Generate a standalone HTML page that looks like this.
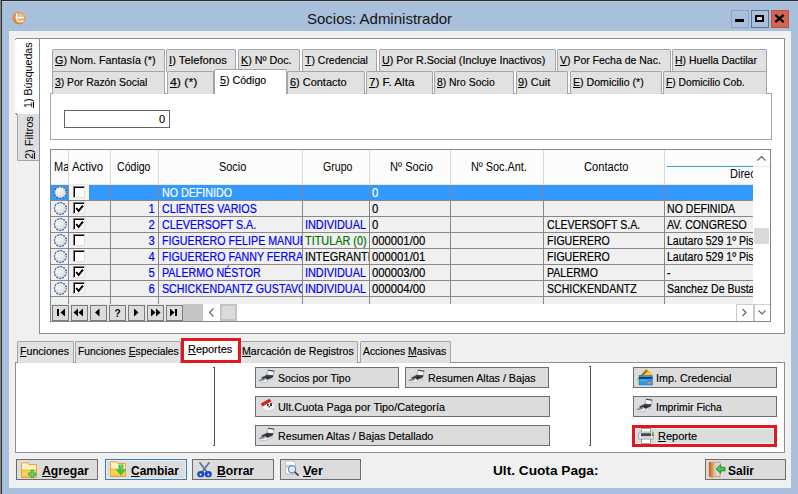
<!DOCTYPE html><html><head><meta charset="utf-8"><style>html,body{margin:0;padding:0;}body{width:798px;height:494px;position:relative;overflow:hidden;background:#a8c0dc;font-family:"Liberation Sans",sans-serif;} u{text-decoration:underline;text-underline-offset:1px;text-decoration-thickness:1px;} svg{position:absolute;overflow:visible}</style></head><body>
<div style="position:absolute;left:0px;top:0px;width:798px;height:1px;background:#2b2b2b"></div>
<div style="position:absolute;left:0px;top:0px;width:1px;height:494px;background:#8a8a8a"></div>
<div style="position:absolute;left:1px;top:0px;width:1px;height:494px;background:#2b2b2b"></div>
<div style="position:absolute;left:2px;top:1px;width:796px;height:1px;background:#b9cde6"></div>
<svg style="left:11px;top:10px" width="16" height="16" viewBox="0 0 16 16"><defs><radialGradient id="ig" cx="0.6" cy="0.4" r="0.75"><stop offset="0" stop-color="#f6d2a8"/><stop offset="0.45" stop-color="#e9a05a"/><stop offset="1" stop-color="#cf6e22"/></radialGradient></defs><circle cx="8" cy="8" r="6.5" fill="url(#ig)"/><path d="M6.2 3.2 C5.2 5.2 5.2 9 6.3 10.6 C7.4 12 10 11.8 12.6 10.8" stroke="#fff" stroke-width="1.3" fill="none"/><path d="M6.2 7.6 H13" stroke="#fff" stroke-width="1.3"/></svg>
<div style="position:absolute;top:11px;font:normal 15px/15px 'Liberation Sans', sans-serif;color:#141414;white-space:nowrap;left:307px;transform:scaleX(1.0000);transform-origin:0 0">Socios: Administrador</div>
<div style="position:absolute;left:731px;top:10px;width:18px;height:18px;box-sizing:border-box;border:1px solid #8da3bf;background:#a8c0dc"></div>
<div style="position:absolute;left:735px;top:19px;width:9px;height:3px;background:#000"></div>
<div style="position:absolute;left:751px;top:10px;width:18px;height:18px;box-sizing:border-box;border:1px solid #5d728d;background:#a8c0dc"></div>
<div style="position:absolute;left:755px;top:15px;width:9px;height:7px;box-sizing:border-box;border:2px solid #000;background:#c9dcf0"></div>
<div style="position:absolute;left:771px;top:10px;width:18px;height:18px;box-sizing:border-box;border:1px solid #c0513d;background:#d4664f"></div>
<svg style="left:774px;top:14px" width="11" height="9" viewBox="0 0 11 9"><path d="M1.3 0.8 L9.7 8.2 M9.7 0.8 L1.3 8.2" stroke="#000" stroke-width="2.3"/></svg>
<div style="position:absolute;left:9px;top:31px;width:782px;height:457px;background:#f0f0f0"></div>
<div style="position:absolute;left:39px;top:38px;width:746px;height:296px;box-sizing:border-box;border:1px solid #8b8f96;background:#fff"></div>
<div style="position:absolute;left:15px;top:39px;width:24px;height:75px;background:#fff"></div>
<div style="position:absolute;left:16px;top:38px;width:23px;height:1px;background:#8b8f96"></div>
<div style="position:absolute;left:15px;top:39px;width:1px;height:1px;background:#8b8f96"></div>
<div style="position:absolute;left:23px;top:108px;transform:rotate(-90deg);transform-origin:0 0;font:11px/11px 'Liberation Sans', sans-serif;color:#000;white-space:nowrap"><span style="display:inline-block;transform:scaleX(0.965);transform-origin:0 0"><u>1</u>) Búsquedas</span></div>
<div style="position:absolute;left:17px;top:114px;width:22px;height:47px;box-sizing:border-box;border:1px solid #a2a5aa;border-right:none;border-top:none;border-radius:0 0 0 2px;background:#dedede"></div>
<div style="position:absolute;left:15px;top:113px;width:2px;height:1px;background:#8b8f96"></div>
<div style="position:absolute;left:16px;top:114px;width:1px;height:1px;background:#8b8f96"></div>
<div style="position:absolute;left:24px;top:159px;transform:rotate(-90deg);transform-origin:0 0;font:11px/11px 'Liberation Sans', sans-serif;color:#000;white-space:nowrap"><span style="display:inline-block;transform:scaleX(1.0);transform-origin:0 0"><u>2</u>) Filtros</span></div>
<div style="position:absolute;left:50px;top:93px;width:722px;height:47px;box-sizing:border-box;border:1px solid #a2a5aa;background:#fff"></div>
<div style="position:absolute;left:52px;top:49px;width:113px;height:23px;box-sizing:border-box;border:1px solid #a2a5aa;border-bottom:none;border-radius:2px 2px 0 0;background:#e1e1e1"></div>
<div style="position:absolute;top:55px;font:normal 11px/11px 'Liberation Sans', sans-serif;color:#000;white-space:nowrap;-webkit-text-stroke:0.15px currentColor;left:54.9px;transform:scaleX(0.9844);transform-origin:0 0"><u>G</u>) Nom. Fantasía (*)</div>
<div style="position:absolute;left:166px;top:49px;width:70px;height:23px;box-sizing:border-box;border:1px solid #a2a5aa;border-bottom:none;border-radius:2px 2px 0 0;background:#e1e1e1"></div>
<div style="position:absolute;top:55px;font:normal 11px/11px 'Liberation Sans', sans-serif;color:#000;white-space:nowrap;-webkit-text-stroke:0.15px currentColor;left:169.2px;transform:scaleX(1.0217);transform-origin:0 0"><u>I</u>) Telefonos</div>
<div style="position:absolute;left:238px;top:49px;width:62px;height:23px;box-sizing:border-box;border:1px solid #a2a5aa;border-bottom:none;border-radius:2px 2px 0 0;background:#e1e1e1"></div>
<div style="position:absolute;top:55px;font:normal 11px/11px 'Liberation Sans', sans-serif;color:#000;white-space:nowrap;-webkit-text-stroke:0.15px currentColor;left:240.7px;transform:scaleX(0.9787);transform-origin:0 0"><u>K</u>) Nº Doc.</div>
<div style="position:absolute;left:302px;top:49px;width:75px;height:23px;box-sizing:border-box;border:1px solid #a2a5aa;border-bottom:none;border-radius:2px 2px 0 0;background:#e1e1e1"></div>
<div style="position:absolute;top:55px;font:normal 11px/11px 'Liberation Sans', sans-serif;color:#000;white-space:nowrap;-webkit-text-stroke:0.15px currentColor;left:305.3px;transform:scaleX(0.9524);transform-origin:0 0"><u>T</u>) Credencial</div>
<div style="position:absolute;left:379px;top:49px;width:177px;height:23px;box-sizing:border-box;border:1px solid #a2a5aa;border-bottom:none;border-radius:2px 2px 0 0;background:#e1e1e1"></div>
<div style="position:absolute;top:55px;font:normal 11px/11px 'Liberation Sans', sans-serif;color:#000;white-space:nowrap;-webkit-text-stroke:0.15px currentColor;left:382.4px;transform:scaleX(0.9748);transform-origin:0 0"><u>U</u>) Por R.Social (Incluye Inactivos)</div>
<div style="position:absolute;left:557px;top:49px;width:114px;height:23px;box-sizing:border-box;border:1px solid #a2a5aa;border-bottom:none;border-radius:2px 2px 0 0;background:#e1e1e1"></div>
<div style="position:absolute;top:55px;font:normal 11px/11px 'Liberation Sans', sans-serif;color:#000;white-space:nowrap;-webkit-text-stroke:0.15px currentColor;left:559.8px;transform:scaleX(0.9529);transform-origin:0 0"><u>V</u>) Por Fecha de Nac.</div>
<div style="position:absolute;left:672px;top:49px;width:95px;height:23px;box-sizing:border-box;border:1px solid #a2a5aa;border-bottom:none;border-radius:2px 2px 0 0;background:#e1e1e1"></div>
<div style="position:absolute;top:55px;font:normal 11px/11px 'Liberation Sans', sans-serif;color:#000;white-space:nowrap;-webkit-text-stroke:0.15px currentColor;left:675.1px;transform:scaleX(0.9501);transform-origin:0 0"><u>H</u>) Huella Dactilar</div>
<div style="position:absolute;left:52px;top:71px;width:113px;height:23px;box-sizing:border-box;border:1px solid #a2a5aa;border-bottom:none;border-radius:2px 2px 0 0;background:#e1e1e1"></div>
<div style="position:absolute;top:77px;font:normal 11px/11px 'Liberation Sans', sans-serif;color:#000;white-space:nowrap;-webkit-text-stroke:0.15px currentColor;left:55.4px;transform:scaleX(0.9433);transform-origin:0 0"><u>3</u>) Por Razón Social</div>
<div style="position:absolute;left:167px;top:71px;width:47px;height:23px;box-sizing:border-box;border:1px solid #a2a5aa;border-bottom:none;border-radius:2px 2px 0 0;background:#e1e1e1"></div>
<div style="position:absolute;top:77px;font:normal 11px/11px 'Liberation Sans', sans-serif;color:#000;white-space:nowrap;-webkit-text-stroke:0.15px currentColor;left:169.7px;transform:scaleX(1.1164);transform-origin:0 0"><u>4</u>) (*)</div>
<div style="position:absolute;left:287px;top:71px;width:78px;height:23px;box-sizing:border-box;border:1px solid #a2a5aa;border-bottom:none;border-radius:2px 2px 0 0;background:#e1e1e1"></div>
<div style="position:absolute;top:77px;font:normal 11px/11px 'Liberation Sans', sans-serif;color:#000;white-space:nowrap;-webkit-text-stroke:0.15px currentColor;left:289.6px;transform:scaleX(0.9952);transform-origin:0 0"><u>6</u>) Contacto</div>
<div style="position:absolute;left:366px;top:71px;width:67px;height:23px;box-sizing:border-box;border:1px solid #a2a5aa;border-bottom:none;border-radius:2px 2px 0 0;background:#e1e1e1"></div>
<div style="position:absolute;top:77px;font:normal 11px/11px 'Liberation Sans', sans-serif;color:#000;white-space:nowrap;-webkit-text-stroke:0.15px currentColor;left:369.2px;transform:scaleX(1.0604);transform-origin:0 0"><u>7</u>) F. Alta</div>
<div style="position:absolute;left:434px;top:71px;width:80px;height:23px;box-sizing:border-box;border:1px solid #a2a5aa;border-bottom:none;border-radius:2px 2px 0 0;background:#e1e1e1"></div>
<div style="position:absolute;top:77px;font:normal 11px/11px 'Liberation Sans', sans-serif;color:#000;white-space:nowrap;-webkit-text-stroke:0.15px currentColor;left:437.4px;transform:scaleX(0.9435);transform-origin:0 0"><u>8</u>) Nro Socio</div>
<div style="position:absolute;left:516px;top:71px;width:52px;height:23px;box-sizing:border-box;border:1px solid #a2a5aa;border-bottom:none;border-radius:2px 2px 0 0;background:#e1e1e1"></div>
<div style="position:absolute;top:77px;font:normal 11px/11px 'Liberation Sans', sans-serif;color:#000;white-space:nowrap;-webkit-text-stroke:0.15px currentColor;left:518.4px;transform:scaleX(0.9967);transform-origin:0 0"><u>9</u>) Cuit</div>
<div style="position:absolute;left:570px;top:71px;width:92px;height:23px;box-sizing:border-box;border:1px solid #a2a5aa;border-bottom:none;border-radius:2px 2px 0 0;background:#e1e1e1"></div>
<div style="position:absolute;top:77px;font:normal 11px/11px 'Liberation Sans', sans-serif;color:#000;white-space:nowrap;-webkit-text-stroke:0.15px currentColor;left:572.8px;transform:scaleX(0.9640);transform-origin:0 0"><u>E</u>) Domicilio (*)</div>
<div style="position:absolute;left:663px;top:71px;width:104px;height:23px;box-sizing:border-box;border:1px solid #a2a5aa;border-bottom:none;border-radius:2px 2px 0 0;background:#e1e1e1"></div>
<div style="position:absolute;top:77px;font:normal 11px/11px 'Liberation Sans', sans-serif;color:#000;white-space:nowrap;-webkit-text-stroke:0.15px currentColor;left:665.8px;transform:scaleX(0.9327);transform-origin:0 0"><u>F</u>) Domicilio Cob.</div>
<div style="position:absolute;left:214px;top:69px;width:73px;height:25px;box-sizing:border-box;border:1px solid #a2a5aa;border-bottom:none;border-radius:2px 2px 0 0;background:#fff"></div>
<div style="position:absolute;top:75px;font:normal 11px/11px 'Liberation Sans', sans-serif;color:#000;white-space:nowrap;-webkit-text-stroke:0.15px currentColor;left:220.4px;transform:scaleX(0.9706);transform-origin:0 0"><u>5</u>) Código</div>
<div style="position:absolute;left:64px;top:110px;width:106px;height:18px;box-sizing:border-box;border:1px solid #646464;background:#fff"></div>
<div style="position:absolute;top:114px;font:normal 11px/11px 'Liberation Sans', sans-serif;color:#000;white-space:nowrap;-webkit-text-stroke:0.15px currentColor;right:633px;transform:scaleX(1.0000);transform-origin:100% 0">0</div>
<div style="position:absolute;left:50px;top:149px;width:721px;height:173px;box-sizing:border-box;border:1px solid #828790;background:#f0f0f0"></div>
<div style="position:absolute;left:51px;top:150px;width:702px;height:34px;background:#fcfcfc"></div>
<div style="position:absolute;left:68px;top:150px;width:1px;height:34px;background:#d9d9d9"></div>
<div style="position:absolute;left:110px;top:150px;width:1px;height:34px;background:#d9d9d9"></div>
<div style="position:absolute;left:158px;top:150px;width:1px;height:34px;background:#d9d9d9"></div>
<div style="position:absolute;left:302px;top:150px;width:1px;height:34px;background:#d9d9d9"></div>
<div style="position:absolute;left:369px;top:150px;width:1px;height:34px;background:#d9d9d9"></div>
<div style="position:absolute;left:450px;top:150px;width:1px;height:34px;background:#d9d9d9"></div>
<div style="position:absolute;left:543px;top:150px;width:1px;height:34px;background:#d9d9d9"></div>
<div style="position:absolute;left:664px;top:150px;width:1px;height:34px;background:#d9d9d9"></div>
<div style="position:absolute;left:51px;top:184px;width:702px;height:1px;background:#ece6df"></div>
<div style="position:absolute;left:51px;top:150px;width:17px;height:34px;overflow:hidden"><div style="position:absolute;left:3px;top:11px;font:12px/12px 'Liberation Sans', sans-serif;white-space:nowrap;transform:scaleX(.92);transform-origin:0 0">Ma</div></div>
<div style="position:absolute;top:161px;font:normal 12px/12px 'Liberation Sans', sans-serif;color:#000;white-space:nowrap;left:72.2px;transform:scaleX(0.9514);transform-origin:0 0">Activo</div>
<div style="position:absolute;top:161px;font:normal 12px/12px 'Liberation Sans', sans-serif;color:#000;white-space:nowrap;left:116.9px;transform:scaleX(0.8809);transform-origin:0 0">Código</div>
<div style="position:absolute;top:161px;font:normal 12px/12px 'Liberation Sans', sans-serif;color:#000;white-space:nowrap;left:219.0px;transform:scaleX(0.9091);transform-origin:0 0">Socio</div>
<div style="position:absolute;top:161px;font:normal 12px/12px 'Liberation Sans', sans-serif;color:#000;white-space:nowrap;left:323.1px;transform:scaleX(0.8843);transform-origin:0 0">Grupo</div>
<div style="position:absolute;top:161px;font:normal 12px/12px 'Liberation Sans', sans-serif;color:#000;white-space:nowrap;left:389.7px;transform:scaleX(0.9244);transform-origin:0 0">Nº Socio</div>
<div style="position:absolute;top:161px;font:normal 12px/12px 'Liberation Sans', sans-serif;color:#000;white-space:nowrap;left:470.9px;transform:scaleX(0.9053);transform-origin:0 0">Nº Soc.Ant.</div>
<div style="position:absolute;top:161px;font:normal 12px/12px 'Liberation Sans', sans-serif;color:#000;white-space:nowrap;left:583.5px;transform:scaleX(0.9265);transform-origin:0 0">Contacto</div>
<div style="position:absolute;left:667px;top:166px;width:86px;height:1px;background:#3b9bd9"></div>
<div style="position:absolute;left:665px;top:150px;width:88px;height:34px;overflow:hidden"><div style="position:absolute;left:65px;top:18px;font:12px/12px 'Liberation Sans', sans-serif;white-space:nowrap;transform:scaleX(.92);transform-origin:0 0">Dirección</div></div>
<div style="position:absolute;left:51px;top:185px;width:702px;height:15px;background:#3399ff"></div>
<div style="position:absolute;left:51px;top:200px;width:702px;height:1px;background:#888888"></div>
<svg style="left:53px;top:186px" width="14" height="14" viewBox="0 0 14 14"><defs><radialGradient id="rg0" cx="0.35" cy="0.3" r="0.8"><stop offset="0" stop-color="#fdfdfd"/><stop offset="1" stop-color="#d4d4d4"/></radialGradient></defs><circle cx="7.4" cy="6.5" r="5.9" fill="url(#rg0)" stroke="#86a2c8" stroke-width="0.9"/><circle cx="7.4" cy="6.5" r="5.9" fill="none" stroke="#1a4a88" stroke-width="1.35" stroke-dasharray="1.1 1.99" stroke-dashoffset="0.55"/></svg>
<div style="position:absolute;left:69px;top:185px;width:20px;height:15px;background:#f4f4f4"></div>
<div style="position:absolute;left:73px;top:186px;width:12px;height:12px;box-sizing:border-box;border-left:1px solid #808080;border-top:1px solid #808080;border-right:1px solid #dcdcdc;border-bottom:1px solid #dcdcdc;background:#fff;box-shadow:inset 1px 1px 0 #000"></div>
<div style="position:absolute;left:158px;top:185px;width:144px;height:15px;overflow:hidden"><div style="position:absolute;left:4px;top:2px;font:12px/12px 'Liberation Sans', sans-serif;color:#fff;white-space:nowrap;-webkit-text-stroke:0.2px currentColor;transform:scaleX(0.89);transform-origin:0 0">NO DEFINIDO</div></div>
<div style="position:absolute;left:369px;top:185px;width:81px;height:15px;overflow:hidden"><div style="position:absolute;left:3px;top:2px;font:12px/12px 'Liberation Sans', sans-serif;color:#fff;white-space:nowrap;-webkit-text-stroke:0.2px currentColor;transform:scaleX(0.94);transform-origin:0 0">0</div></div>
<div style="position:absolute;left:51px;top:216px;width:702px;height:1px;background:#888888"></div>
<svg style="left:53px;top:202px" width="14" height="14" viewBox="0 0 14 14"><defs><radialGradient id="rg1" cx="0.35" cy="0.3" r="0.8"><stop offset="0" stop-color="#fdfdfd"/><stop offset="1" stop-color="#d4d4d4"/></radialGradient></defs><circle cx="7.4" cy="6.5" r="5.9" fill="url(#rg1)" stroke="#86a2c8" stroke-width="0.9"/><circle cx="7.4" cy="6.5" r="5.9" fill="none" stroke="#1a4a88" stroke-width="1.35" stroke-dasharray="1.1 1.99" stroke-dashoffset="0.55"/></svg>
<div style="position:absolute;left:73px;top:202px;width:12px;height:12px;box-sizing:border-box;border-left:1px solid #808080;border-top:1px solid #808080;border-right:1px solid #dcdcdc;border-bottom:1px solid #dcdcdc;background:#fff;box-shadow:inset 1px 1px 0 #000"></div>
<svg style="left:75px;top:204px" width="9" height="9" viewBox="0 0 9 9"><path d="M1.2 4 L3.6 7 L8 1.6" stroke="#000" stroke-width="2" fill="none"/></svg>
<div style="position:absolute;left:110px;top:201px;width:48px;height:15px;overflow:hidden"><div style="position:absolute;right:3px;top:2px;font:12px/12px 'Liberation Sans', sans-serif;color:#00f;white-space:nowrap;-webkit-text-stroke:0.2px currentColor;transform:scaleX(0.94);transform-origin:100% 0">1</div></div>
<div style="position:absolute;left:158px;top:201px;width:144px;height:15px;overflow:hidden"><div style="position:absolute;left:4px;top:2px;font:12px/12px 'Liberation Sans', sans-serif;color:#00f;white-space:nowrap;-webkit-text-stroke:0.2px currentColor;transform:scaleX(0.89);transform-origin:0 0">CLIENTES VARIOS</div></div>
<div style="position:absolute;left:369px;top:201px;width:81px;height:15px;overflow:hidden"><div style="position:absolute;left:3px;top:2px;font:12px/12px 'Liberation Sans', sans-serif;color:#000;white-space:nowrap;-webkit-text-stroke:0.2px currentColor;transform:scaleX(0.94);transform-origin:0 0">0</div></div>
<div style="position:absolute;left:664px;top:201px;width:89px;height:15px;overflow:hidden"><div style="position:absolute;left:3px;top:2px;font:12px/12px 'Liberation Sans', sans-serif;color:#000;white-space:nowrap;-webkit-text-stroke:0.2px currentColor;transform:scaleX(0.88);transform-origin:0 0">NO DEFINIDA</div></div>
<div style="position:absolute;left:51px;top:232px;width:702px;height:1px;background:#888888"></div>
<svg style="left:53px;top:218px" width="14" height="14" viewBox="0 0 14 14"><defs><radialGradient id="rg2" cx="0.35" cy="0.3" r="0.8"><stop offset="0" stop-color="#fdfdfd"/><stop offset="1" stop-color="#d4d4d4"/></radialGradient></defs><circle cx="7.4" cy="6.5" r="5.9" fill="url(#rg2)" stroke="#86a2c8" stroke-width="0.9"/><circle cx="7.4" cy="6.5" r="5.9" fill="none" stroke="#1a4a88" stroke-width="1.35" stroke-dasharray="1.1 1.99" stroke-dashoffset="0.55"/></svg>
<div style="position:absolute;left:73px;top:218px;width:12px;height:12px;box-sizing:border-box;border-left:1px solid #808080;border-top:1px solid #808080;border-right:1px solid #dcdcdc;border-bottom:1px solid #dcdcdc;background:#fff;box-shadow:inset 1px 1px 0 #000"></div>
<svg style="left:75px;top:220px" width="9" height="9" viewBox="0 0 9 9"><path d="M1.2 4 L3.6 7 L8 1.6" stroke="#000" stroke-width="2" fill="none"/></svg>
<div style="position:absolute;left:110px;top:217px;width:48px;height:15px;overflow:hidden"><div style="position:absolute;right:3px;top:2px;font:12px/12px 'Liberation Sans', sans-serif;color:#00f;white-space:nowrap;-webkit-text-stroke:0.2px currentColor;transform:scaleX(0.94);transform-origin:100% 0">2</div></div>
<div style="position:absolute;left:158px;top:217px;width:144px;height:15px;overflow:hidden"><div style="position:absolute;left:4px;top:2px;font:12px/12px 'Liberation Sans', sans-serif;color:#00f;white-space:nowrap;-webkit-text-stroke:0.2px currentColor;transform:scaleX(0.89);transform-origin:0 0">CLEVERSOFT S.A.</div></div>
<div style="position:absolute;left:302px;top:217px;width:67px;height:15px;overflow:hidden"><div style="position:absolute;left:3px;top:2px;font:12px/12px 'Liberation Sans', sans-serif;color:#0000f0;white-space:nowrap;-webkit-text-stroke:0.2px currentColor;transform:scaleX(0.905);transform-origin:0 0">INDIVIDUAL</div></div>
<div style="position:absolute;left:369px;top:217px;width:81px;height:15px;overflow:hidden"><div style="position:absolute;left:3px;top:2px;font:12px/12px 'Liberation Sans', sans-serif;color:#000;white-space:nowrap;-webkit-text-stroke:0.2px currentColor;transform:scaleX(0.94);transform-origin:0 0">0</div></div>
<div style="position:absolute;left:543px;top:217px;width:121px;height:15px;overflow:hidden"><div style="position:absolute;left:4px;top:2px;font:12px/12px 'Liberation Sans', sans-serif;color:#000;white-space:nowrap;-webkit-text-stroke:0.2px currentColor;transform:scaleX(0.88);transform-origin:0 0">CLEVERSOFT S.A.</div></div>
<div style="position:absolute;left:664px;top:217px;width:89px;height:15px;overflow:hidden"><div style="position:absolute;left:3px;top:2px;font:12px/12px 'Liberation Sans', sans-serif;color:#000;white-space:nowrap;-webkit-text-stroke:0.2px currentColor;transform:scaleX(0.88);transform-origin:0 0">AV. CONGRESO</div></div>
<div style="position:absolute;left:51px;top:248px;width:702px;height:1px;background:#888888"></div>
<svg style="left:53px;top:234px" width="14" height="14" viewBox="0 0 14 14"><defs><radialGradient id="rg3" cx="0.35" cy="0.3" r="0.8"><stop offset="0" stop-color="#fdfdfd"/><stop offset="1" stop-color="#d4d4d4"/></radialGradient></defs><circle cx="7.4" cy="6.5" r="5.9" fill="url(#rg3)" stroke="#86a2c8" stroke-width="0.9"/><circle cx="7.4" cy="6.5" r="5.9" fill="none" stroke="#1a4a88" stroke-width="1.35" stroke-dasharray="1.1 1.99" stroke-dashoffset="0.55"/></svg>
<div style="position:absolute;left:73px;top:234px;width:12px;height:12px;box-sizing:border-box;border-left:1px solid #808080;border-top:1px solid #808080;border-right:1px solid #dcdcdc;border-bottom:1px solid #dcdcdc;background:#fff;box-shadow:inset 1px 1px 0 #000"></div>
<div style="position:absolute;left:110px;top:233px;width:48px;height:15px;overflow:hidden"><div style="position:absolute;right:3px;top:2px;font:12px/12px 'Liberation Sans', sans-serif;color:#00f;white-space:nowrap;-webkit-text-stroke:0.2px currentColor;transform:scaleX(0.94);transform-origin:100% 0">3</div></div>
<div style="position:absolute;left:158px;top:233px;width:144px;height:15px;overflow:hidden"><div style="position:absolute;left:4px;top:2px;font:12px/12px 'Liberation Sans', sans-serif;color:#00f;white-space:nowrap;-webkit-text-stroke:0.2px currentColor;transform:scaleX(0.89);transform-origin:0 0">FIGUERERO FELIPE MANUEL</div></div>
<div style="position:absolute;left:302px;top:233px;width:67px;height:15px;overflow:hidden"><div style="position:absolute;left:3px;top:2px;font:12px/12px 'Liberation Sans', sans-serif;color:#007000;white-space:nowrap;-webkit-text-stroke:0.2px currentColor;transform:scaleX(0.905);transform-origin:0 0">TITULAR (0)</div></div>
<div style="position:absolute;left:369px;top:233px;width:81px;height:15px;overflow:hidden"><div style="position:absolute;left:3px;top:2px;font:12px/12px 'Liberation Sans', sans-serif;color:#000;white-space:nowrap;-webkit-text-stroke:0.2px currentColor;transform:scaleX(0.94);transform-origin:0 0">000001/00</div></div>
<div style="position:absolute;left:543px;top:233px;width:121px;height:15px;overflow:hidden"><div style="position:absolute;left:4px;top:2px;font:12px/12px 'Liberation Sans', sans-serif;color:#000;white-space:nowrap;-webkit-text-stroke:0.2px currentColor;transform:scaleX(0.88);transform-origin:0 0">FIGUERERO</div></div>
<div style="position:absolute;left:664px;top:233px;width:89px;height:15px;overflow:hidden"><div style="position:absolute;left:3px;top:2px;font:12px/12px 'Liberation Sans', sans-serif;color:#000;white-space:nowrap;-webkit-text-stroke:0.2px currentColor;transform:scaleX(0.88);transform-origin:0 0">Lautaro 529 1º Piso</div></div>
<div style="position:absolute;left:51px;top:264px;width:702px;height:1px;background:#888888"></div>
<svg style="left:53px;top:250px" width="14" height="14" viewBox="0 0 14 14"><defs><radialGradient id="rg4" cx="0.35" cy="0.3" r="0.8"><stop offset="0" stop-color="#fdfdfd"/><stop offset="1" stop-color="#d4d4d4"/></radialGradient></defs><circle cx="7.4" cy="6.5" r="5.9" fill="url(#rg4)" stroke="#86a2c8" stroke-width="0.9"/><circle cx="7.4" cy="6.5" r="5.9" fill="none" stroke="#1a4a88" stroke-width="1.35" stroke-dasharray="1.1 1.99" stroke-dashoffset="0.55"/></svg>
<div style="position:absolute;left:73px;top:250px;width:12px;height:12px;box-sizing:border-box;border-left:1px solid #808080;border-top:1px solid #808080;border-right:1px solid #dcdcdc;border-bottom:1px solid #dcdcdc;background:#fff;box-shadow:inset 1px 1px 0 #000"></div>
<div style="position:absolute;left:110px;top:249px;width:48px;height:15px;overflow:hidden"><div style="position:absolute;right:3px;top:2px;font:12px/12px 'Liberation Sans', sans-serif;color:#00f;white-space:nowrap;-webkit-text-stroke:0.2px currentColor;transform:scaleX(0.94);transform-origin:100% 0">4</div></div>
<div style="position:absolute;left:158px;top:249px;width:144px;height:15px;overflow:hidden"><div style="position:absolute;left:4px;top:2px;font:12px/12px 'Liberation Sans', sans-serif;color:#00f;white-space:nowrap;-webkit-text-stroke:0.2px currentColor;transform:scaleX(0.89);transform-origin:0 0">FIGUERERO FANNY FERRARI</div></div>
<div style="position:absolute;left:302px;top:249px;width:67px;height:15px;overflow:hidden"><div style="position:absolute;left:3px;top:2px;font:12px/12px 'Liberation Sans', sans-serif;color:#000;white-space:nowrap;-webkit-text-stroke:0.2px currentColor;transform:scaleX(0.905);transform-origin:0 0">INTEGRANTE</div></div>
<div style="position:absolute;left:369px;top:249px;width:81px;height:15px;overflow:hidden"><div style="position:absolute;left:3px;top:2px;font:12px/12px 'Liberation Sans', sans-serif;color:#000;white-space:nowrap;-webkit-text-stroke:0.2px currentColor;transform:scaleX(0.94);transform-origin:0 0">000001/01</div></div>
<div style="position:absolute;left:543px;top:249px;width:121px;height:15px;overflow:hidden"><div style="position:absolute;left:4px;top:2px;font:12px/12px 'Liberation Sans', sans-serif;color:#000;white-space:nowrap;-webkit-text-stroke:0.2px currentColor;transform:scaleX(0.88);transform-origin:0 0">FIGUERERO</div></div>
<div style="position:absolute;left:664px;top:249px;width:89px;height:15px;overflow:hidden"><div style="position:absolute;left:3px;top:2px;font:12px/12px 'Liberation Sans', sans-serif;color:#000;white-space:nowrap;-webkit-text-stroke:0.2px currentColor;transform:scaleX(0.88);transform-origin:0 0">Lautaro 529 1º Piso</div></div>
<div style="position:absolute;left:51px;top:280px;width:702px;height:1px;background:#888888"></div>
<svg style="left:53px;top:266px" width="14" height="14" viewBox="0 0 14 14"><defs><radialGradient id="rg5" cx="0.35" cy="0.3" r="0.8"><stop offset="0" stop-color="#fdfdfd"/><stop offset="1" stop-color="#d4d4d4"/></radialGradient></defs><circle cx="7.4" cy="6.5" r="5.9" fill="url(#rg5)" stroke="#86a2c8" stroke-width="0.9"/><circle cx="7.4" cy="6.5" r="5.9" fill="none" stroke="#1a4a88" stroke-width="1.35" stroke-dasharray="1.1 1.99" stroke-dashoffset="0.55"/></svg>
<div style="position:absolute;left:73px;top:266px;width:12px;height:12px;box-sizing:border-box;border-left:1px solid #808080;border-top:1px solid #808080;border-right:1px solid #dcdcdc;border-bottom:1px solid #dcdcdc;background:#fff;box-shadow:inset 1px 1px 0 #000"></div>
<svg style="left:75px;top:268px" width="9" height="9" viewBox="0 0 9 9"><path d="M1.2 4 L3.6 7 L8 1.6" stroke="#000" stroke-width="2" fill="none"/></svg>
<div style="position:absolute;left:110px;top:265px;width:48px;height:15px;overflow:hidden"><div style="position:absolute;right:3px;top:2px;font:12px/12px 'Liberation Sans', sans-serif;color:#00f;white-space:nowrap;-webkit-text-stroke:0.2px currentColor;transform:scaleX(0.94);transform-origin:100% 0">5</div></div>
<div style="position:absolute;left:158px;top:265px;width:144px;height:15px;overflow:hidden"><div style="position:absolute;left:4px;top:2px;font:12px/12px 'Liberation Sans', sans-serif;color:#00f;white-space:nowrap;-webkit-text-stroke:0.2px currentColor;transform:scaleX(0.89);transform-origin:0 0">PALERMO NÉSTOR</div></div>
<div style="position:absolute;left:302px;top:265px;width:67px;height:15px;overflow:hidden"><div style="position:absolute;left:3px;top:2px;font:12px/12px 'Liberation Sans', sans-serif;color:#0000f0;white-space:nowrap;-webkit-text-stroke:0.2px currentColor;transform:scaleX(0.905);transform-origin:0 0">INDIVIDUAL</div></div>
<div style="position:absolute;left:369px;top:265px;width:81px;height:15px;overflow:hidden"><div style="position:absolute;left:3px;top:2px;font:12px/12px 'Liberation Sans', sans-serif;color:#000;white-space:nowrap;-webkit-text-stroke:0.2px currentColor;transform:scaleX(0.94);transform-origin:0 0">000003/00</div></div>
<div style="position:absolute;left:543px;top:265px;width:121px;height:15px;overflow:hidden"><div style="position:absolute;left:4px;top:2px;font:12px/12px 'Liberation Sans', sans-serif;color:#000;white-space:nowrap;-webkit-text-stroke:0.2px currentColor;transform:scaleX(0.88);transform-origin:0 0">PALERMO</div></div>
<div style="position:absolute;left:664px;top:265px;width:89px;height:15px;overflow:hidden"><div style="position:absolute;left:3px;top:2px;font:12px/12px 'Liberation Sans', sans-serif;color:#000;white-space:nowrap;-webkit-text-stroke:0.2px currentColor;transform:scaleX(0.88);transform-origin:0 0">-</div></div>
<div style="position:absolute;left:51px;top:296px;width:702px;height:1px;background:#888888"></div>
<svg style="left:53px;top:282px" width="14" height="14" viewBox="0 0 14 14"><defs><radialGradient id="rg6" cx="0.35" cy="0.3" r="0.8"><stop offset="0" stop-color="#fdfdfd"/><stop offset="1" stop-color="#d4d4d4"/></radialGradient></defs><circle cx="7.4" cy="6.5" r="5.9" fill="url(#rg6)" stroke="#86a2c8" stroke-width="0.9"/><circle cx="7.4" cy="6.5" r="5.9" fill="none" stroke="#1a4a88" stroke-width="1.35" stroke-dasharray="1.1 1.99" stroke-dashoffset="0.55"/></svg>
<div style="position:absolute;left:73px;top:282px;width:12px;height:12px;box-sizing:border-box;border-left:1px solid #808080;border-top:1px solid #808080;border-right:1px solid #dcdcdc;border-bottom:1px solid #dcdcdc;background:#fff;box-shadow:inset 1px 1px 0 #000"></div>
<svg style="left:75px;top:284px" width="9" height="9" viewBox="0 0 9 9"><path d="M1.2 4 L3.6 7 L8 1.6" stroke="#000" stroke-width="2" fill="none"/></svg>
<div style="position:absolute;left:110px;top:281px;width:48px;height:15px;overflow:hidden"><div style="position:absolute;right:3px;top:2px;font:12px/12px 'Liberation Sans', sans-serif;color:#00f;white-space:nowrap;-webkit-text-stroke:0.2px currentColor;transform:scaleX(0.94);transform-origin:100% 0">6</div></div>
<div style="position:absolute;left:158px;top:281px;width:144px;height:15px;overflow:hidden"><div style="position:absolute;left:4px;top:2px;font:12px/12px 'Liberation Sans', sans-serif;color:#00f;white-space:nowrap;-webkit-text-stroke:0.2px currentColor;transform:scaleX(0.89);transform-origin:0 0">SCHICKENDANTZ GUSTAVO</div></div>
<div style="position:absolute;left:302px;top:281px;width:67px;height:15px;overflow:hidden"><div style="position:absolute;left:3px;top:2px;font:12px/12px 'Liberation Sans', sans-serif;color:#0000f0;white-space:nowrap;-webkit-text-stroke:0.2px currentColor;transform:scaleX(0.905);transform-origin:0 0">INDIVIDUAL</div></div>
<div style="position:absolute;left:369px;top:281px;width:81px;height:15px;overflow:hidden"><div style="position:absolute;left:3px;top:2px;font:12px/12px 'Liberation Sans', sans-serif;color:#000;white-space:nowrap;-webkit-text-stroke:0.2px currentColor;transform:scaleX(0.94);transform-origin:0 0">000004/00</div></div>
<div style="position:absolute;left:543px;top:281px;width:121px;height:15px;overflow:hidden"><div style="position:absolute;left:4px;top:2px;font:12px/12px 'Liberation Sans', sans-serif;color:#000;white-space:nowrap;-webkit-text-stroke:0.2px currentColor;transform:scaleX(0.88);transform-origin:0 0">SCHICKENDANTZ</div></div>
<div style="position:absolute;left:664px;top:281px;width:89px;height:15px;overflow:hidden"><div style="position:absolute;left:3px;top:2px;font:12px/12px 'Liberation Sans', sans-serif;color:#000;white-space:nowrap;-webkit-text-stroke:0.2px currentColor;transform:scaleX(0.88);transform-origin:0 0">Sanchez De Bustamante</div></div>
<div style="position:absolute;left:68px;top:185px;width:1px;height:119px;background:#888888"></div>
<div style="position:absolute;left:110px;top:185px;width:1px;height:119px;background:#888888"></div>
<div style="position:absolute;left:158px;top:185px;width:1px;height:119px;background:#888888"></div>
<div style="position:absolute;left:302px;top:185px;width:1px;height:119px;background:#888888"></div>
<div style="position:absolute;left:369px;top:185px;width:1px;height:119px;background:#888888"></div>
<div style="position:absolute;left:450px;top:185px;width:1px;height:119px;background:#888888"></div>
<div style="position:absolute;left:543px;top:185px;width:1px;height:119px;background:#888888"></div>
<div style="position:absolute;left:664px;top:185px;width:1px;height:119px;background:#888888"></div>
<div style="position:absolute;left:753px;top:150px;width:17px;height:154px;background:#fff"></div>
<div style="position:absolute;left:753px;top:166px;width:17px;height:1px;background:#ececec"></div>
<svg style="left:753px;top:150px" width="17" height="17"><path d="M4.5 10.5 L8.5 6.5 L12.5 10.5" stroke="#606060" stroke-width="1.1" fill="none"/></svg>
<div style="position:absolute;left:754px;top:228px;width:15px;height:16px;background:#dadada"></div>
<div style="position:absolute;left:51px;top:304px;width:702px;height:17px;background:#e6e6e6"></div>
<div style="position:absolute;left:52px;top:305px;width:17px;height:16px;box-sizing:border-box;border:1px solid #7a7a7a;background:#dcdcdc"></div>
<div style="position:absolute;left:71px;top:305px;width:17px;height:16px;box-sizing:border-box;border:1px solid #7a7a7a;background:#dcdcdc"></div>
<div style="position:absolute;left:90px;top:305px;width:17px;height:16px;box-sizing:border-box;border:1px solid #7a7a7a;background:#dcdcdc"></div>
<div style="position:absolute;left:109px;top:305px;width:17px;height:16px;box-sizing:border-box;border:1px solid #7a7a7a;background:#dcdcdc"></div>
<div style="position:absolute;left:128px;top:305px;width:17px;height:16px;box-sizing:border-box;border:1px solid #7a7a7a;background:#dcdcdc"></div>
<div style="position:absolute;left:147px;top:305px;width:17px;height:16px;box-sizing:border-box;border:1px solid #7a7a7a;background:#dcdcdc"></div>
<div style="position:absolute;left:166px;top:305px;width:17px;height:16px;box-sizing:border-box;border:1px solid #7a7a7a;background:#dcdcdc"></div>
<svg style="left:52px;top:305px" width="131" height="16" viewBox="0 0 131 16"><rect x="5" y="4" width="2" height="7" fill="#000"/><path d="M13 3.5 L8.5 7.5 L13 11.5 Z" fill="#000"/><path d="M26 3.5 L21.5 7.5 L26 11.5 Z M31 3.5 L26.5 7.5 L31 11.5 Z" fill="#000"/><path d="M47.5 3.5 L43 7.5 L47.5 11.5 Z" fill="#000"/><text x="65.5" y="12" font-family="Liberation Sans" font-weight="bold" font-size="10" text-anchor="middle">?</text><path d="M82 3.5 L86.5 7.5 L82 11.5 Z" fill="#000"/><path d="M99 3.5 L103.5 7.5 L99 11.5 Z M104 3.5 L108.5 7.5 L104 11.5 Z" fill="#000"/><path d="M118 3.5 L122.5 7.5 L118 11.5 Z" fill="#000"/><rect x="123" y="4" width="2" height="7" fill="#000"/></svg>
<div style="position:absolute;left:183px;top:304px;width:20px;height:17px;background:#c6c6c6"></div>
<div style="position:absolute;left:203px;top:304px;width:550px;height:17px;background:#fff"></div>
<svg style="left:203px;top:304px" width="17" height="17"><path d="M10.5 4.5 L6.5 8.5 L10.5 12.5" stroke="#606060" stroke-width="1.1" fill="none"/></svg>
<div style="position:absolute;left:220px;top:304px;width:17px;height:17px;box-sizing:border-box;border:2px solid #c4c4c4;background:#dadada"></div>
<div style="position:absolute;left:736px;top:304px;width:1px;height:17px;background:#c8c8c8"></div>
<div style="position:absolute;left:753px;top:304px;width:2px;height:17px;background:#c8c8c8"></div>
<div style="position:absolute;left:753px;top:304px;width:17px;height:17px;background:#fff"></div>
<svg style="left:737px;top:304px" width="17" height="17"><path d="M5.5 5 L9 8.5 L5.5 12" stroke="#606060" stroke-width="1.1" fill="none"/></svg>
<div style="position:absolute;left:753px;top:304px;width:2px;height:17px;background:#c8c8c8"></div>
<div style="position:absolute;left:737px;top:304px;width:33px;height:1px;background:#d0d0d0"></div>
<svg style="left:753px;top:304px" width="17" height="17"><path d="M5.5 6.5 L9 10 L12.5 6.5" stroke="#606060" stroke-width="1.1" fill="none"/></svg>
<div style="position:absolute;left:15px;top:362px;width:770px;height:91px;box-sizing:border-box;border:1px solid #8b8f96;background:#fff"></div>
<div style="position:absolute;left:17px;top:341px;width:57px;height:22px;box-sizing:border-box;border:1px solid #a2a5aa;border-bottom:none;border-radius:2px 2px 0 0;background:#e1e1e1"></div>
<div style="position:absolute;top:346px;font:normal 11px/11px 'Liberation Sans', sans-serif;color:#000;white-space:nowrap;-webkit-text-stroke:0.15px currentColor;left:19.8px;transform:scaleX(0.9649);transform-origin:0 0"><u>F</u>unciones</div>
<div style="position:absolute;left:75px;top:341px;width:106px;height:22px;box-sizing:border-box;border:1px solid #a2a5aa;border-bottom:none;border-radius:2px 2px 0 0;background:#e1e1e1"></div>
<div style="position:absolute;top:346px;font:normal 11px/11px 'Liberation Sans', sans-serif;color:#000;white-space:nowrap;-webkit-text-stroke:0.15px currentColor;left:77.7px;transform:scaleX(0.9410);transform-origin:0 0">Funciones <u>E</u>speciales</div>
<div style="position:absolute;left:240px;top:341px;width:118px;height:22px;box-sizing:border-box;border:1px solid #a2a5aa;border-bottom:none;border-radius:2px 2px 0 0;background:#e1e1e1"></div>
<div style="position:absolute;top:346px;font:normal 11px/11px 'Liberation Sans', sans-serif;color:#000;white-space:nowrap;-webkit-text-stroke:0.15px currentColor;left:242.0px;transform:scaleX(0.9666);transform-origin:0 0"><u>M</u>arcación de Registros</div>
<div style="position:absolute;left:360px;top:341px;width:91px;height:22px;box-sizing:border-box;border:1px solid #a2a5aa;border-bottom:none;border-radius:2px 2px 0 0;background:#e1e1e1"></div>
<div style="position:absolute;top:346px;font:normal 11px/11px 'Liberation Sans', sans-serif;color:#000;white-space:nowrap;-webkit-text-stroke:0.15px currentColor;left:363.2px;transform:scaleX(0.9436);transform-origin:0 0">Acciones <u>M</u>asivas</div>
<div style="position:absolute;left:181px;top:338px;width:60px;height:25px;box-sizing:border-box;border:3px solid #e3161f;background:#fff"></div>
<div style="position:absolute;top:344px;font:normal 11px/11px 'Liberation Sans', sans-serif;color:#000;white-space:nowrap;-webkit-text-stroke:0.15px currentColor;left:188px;transform:scaleX(0.9920);transform-origin:0 0"><u>R</u>eportes</div>
<div style="position:absolute;left:214px;top:367px;width:1px;height:79px;background:#505050"></div>
<div style="position:absolute;left:213px;top:367px;width:1px;height:1px;background:#505050"></div>
<div style="position:absolute;left:213px;top:445px;width:1px;height:1px;background:#505050"></div>
<div style="position:absolute;left:590px;top:366px;width:1px;height:80px;background:#505050"></div>
<div style="position:absolute;left:589px;top:366px;width:1px;height:1px;background:#505050"></div>
<div style="position:absolute;left:589px;top:445px;width:1px;height:1px;background:#505050"></div>
<div style="position:absolute;left:255px;top:367px;width:144px;height:21px;box-sizing:border-box;border:1px solid #6e6e6e;background:#dcdcdc"></div>
<div style="position:absolute;top:373px;font:normal 11px/11px 'Liberation Sans', sans-serif;color:#000;white-space:nowrap;-webkit-text-stroke:0.15px currentColor;left:277.9px;transform:scaleX(0.9561);transform-origin:0 0">Socios por Tipo</div>
<div style="position:absolute;left:405px;top:367px;width:144px;height:21px;box-sizing:border-box;border:1px solid #6e6e6e;background:#dcdcdc"></div>
<div style="position:absolute;top:373px;font:normal 11px/11px 'Liberation Sans', sans-serif;color:#000;white-space:nowrap;-webkit-text-stroke:0.15px currentColor;left:427.7px;transform:scaleX(0.9722);transform-origin:0 0">Resumen Altas / Bajas</div>
<div style="position:absolute;left:255px;top:396px;width:295px;height:21px;box-sizing:border-box;border:1px solid #6e6e6e;background:#dcdcdc"></div>
<div style="position:absolute;top:402px;font:normal 11px/11px 'Liberation Sans', sans-serif;color:#000;white-space:nowrap;-webkit-text-stroke:0.15px currentColor;left:277.8px;transform:scaleX(0.9895);transform-origin:0 0">Ult.Cuota Paga por Tipo/Categoría</div>
<div style="position:absolute;left:255px;top:425px;width:295px;height:21px;box-sizing:border-box;border:1px solid #6e6e6e;background:#dcdcdc"></div>
<div style="position:absolute;top:431px;font:normal 11px/11px 'Liberation Sans', sans-serif;color:#000;white-space:nowrap;-webkit-text-stroke:0.15px currentColor;left:277.8px;transform:scaleX(0.9694);transform-origin:0 0">Resumen Altas / Bajas Detallado</div>
<div style="position:absolute;left:633px;top:367px;width:144px;height:21px;box-sizing:border-box;border:1px solid #6e6e6e;background:#dcdcdc"></div>
<div style="position:absolute;top:373px;font:normal 11px/11px 'Liberation Sans', sans-serif;color:#000;white-space:nowrap;-webkit-text-stroke:0.15px currentColor;left:656.3px;transform:scaleX(0.9773);transform-origin:0 0">Imp. Credencial</div>
<div style="position:absolute;left:633px;top:396px;width:144px;height:21px;box-sizing:border-box;border:1px solid #6e6e6e;background:#dcdcdc"></div>
<div style="position:absolute;top:402px;font:normal 11px/11px 'Liberation Sans', sans-serif;color:#000;white-space:nowrap;-webkit-text-stroke:0.15px currentColor;left:656.3px;transform:scaleX(0.9459);transform-origin:0 0">Imprimir Ficha</div>
<div style="position:absolute;left:632px;top:425px;width:145px;height:22px;box-sizing:border-box;border:3px solid #e3161f;background:#dcdcdc;box-shadow:inset 0 0 0 1px #eaf2f2"></div>
<div style="position:absolute;top:431px;font:normal 11px/11px 'Liberation Sans', sans-serif;color:#000;white-space:nowrap;-webkit-text-stroke:0.15px currentColor;left:658px;transform:scaleX(1.0011);transform-origin:0 0"><u>R</u>eporte</div>
<svg style="left:257px;top:368px" width="20" height="16" viewBox="0 0 20 16"><path d="M2.5 8.6 L7.5 6.8 L9 8 L4 10 Z" fill="#c9d3de"/><path d="M11 2.2 L17.2 3.2 L15.8 8 L9.8 6.8 Z" fill="#f2f7fc" stroke="#8c9096" stroke-width="0.6"/><path d="M11 2.2 L17.2 3.2" stroke="#3c3c3c" stroke-width="1"/><path d="M4.8 9.6 L10 6.8 L16.6 7.6 L15.6 9.6 L9.6 12 L4.4 11.2 Z" fill="#2e2e2e"/><path d="M6 9.4 L10.5 7.6 L14.5 8.2" stroke="#6a6a6a" stroke-width="0.6" fill="none"/><path d="M1.6 11.8 L8.6 10.6 L10.6 12.2 L9.6 14.6 L2.4 14.2 Z" fill="#eaf1f8" stroke="#9fb0c2" stroke-width="0.6"/><path d="M2.6 12.4 L7.6 11.6" stroke="#404040" stroke-width="0.9"/><path d="M12.5 11.5 L16 9.5 M13.5 12.5 L16.5 10.8" stroke="#b0b0b0" stroke-width="0.6"/></svg>
<svg style="left:407px;top:368px" width="20" height="16" viewBox="0 0 20 16"><path d="M2.5 8.6 L7.5 6.8 L9 8 L4 10 Z" fill="#c9d3de"/><path d="M11 2.2 L17.2 3.2 L15.8 8 L9.8 6.8 Z" fill="#f2f7fc" stroke="#8c9096" stroke-width="0.6"/><path d="M11 2.2 L17.2 3.2" stroke="#3c3c3c" stroke-width="1"/><path d="M4.8 9.6 L10 6.8 L16.6 7.6 L15.6 9.6 L9.6 12 L4.4 11.2 Z" fill="#2e2e2e"/><path d="M6 9.4 L10.5 7.6 L14.5 8.2" stroke="#6a6a6a" stroke-width="0.6" fill="none"/><path d="M1.6 11.8 L8.6 10.6 L10.6 12.2 L9.6 14.6 L2.4 14.2 Z" fill="#eaf1f8" stroke="#9fb0c2" stroke-width="0.6"/><path d="M2.6 12.4 L7.6 11.6" stroke="#404040" stroke-width="0.9"/><path d="M12.5 11.5 L16 9.5 M13.5 12.5 L16.5 10.8" stroke="#b0b0b0" stroke-width="0.6"/></svg>
<svg style="left:257px;top:426px" width="20" height="16" viewBox="0 0 20 16"><path d="M2.5 8.6 L7.5 6.8 L9 8 L4 10 Z" fill="#c9d3de"/><path d="M11 2.2 L17.2 3.2 L15.8 8 L9.8 6.8 Z" fill="#f2f7fc" stroke="#8c9096" stroke-width="0.6"/><path d="M11 2.2 L17.2 3.2" stroke="#3c3c3c" stroke-width="1"/><path d="M4.8 9.6 L10 6.8 L16.6 7.6 L15.6 9.6 L9.6 12 L4.4 11.2 Z" fill="#2e2e2e"/><path d="M6 9.4 L10.5 7.6 L14.5 8.2" stroke="#6a6a6a" stroke-width="0.6" fill="none"/><path d="M1.6 11.8 L8.6 10.6 L10.6 12.2 L9.6 14.6 L2.4 14.2 Z" fill="#eaf1f8" stroke="#9fb0c2" stroke-width="0.6"/><path d="M2.6 12.4 L7.6 11.6" stroke="#404040" stroke-width="0.9"/><path d="M12.5 11.5 L16 9.5 M13.5 12.5 L16.5 10.8" stroke="#b0b0b0" stroke-width="0.6"/></svg>
<svg style="left:635px;top:397px" width="20" height="16" viewBox="0 0 20 16"><path d="M2.5 8.6 L7.5 6.8 L9 8 L4 10 Z" fill="#c9d3de"/><path d="M11 2.2 L17.2 3.2 L15.8 8 L9.8 6.8 Z" fill="#f2f7fc" stroke="#8c9096" stroke-width="0.6"/><path d="M11 2.2 L17.2 3.2" stroke="#3c3c3c" stroke-width="1"/><path d="M4.8 9.6 L10 6.8 L16.6 7.6 L15.6 9.6 L9.6 12 L4.4 11.2 Z" fill="#2e2e2e"/><path d="M6 9.4 L10.5 7.6 L14.5 8.2" stroke="#6a6a6a" stroke-width="0.6" fill="none"/><path d="M1.6 11.8 L8.6 10.6 L10.6 12.2 L9.6 14.6 L2.4 14.2 Z" fill="#eaf1f8" stroke="#9fb0c2" stroke-width="0.6"/><path d="M2.6 12.4 L7.6 11.6" stroke="#404040" stroke-width="0.9"/><path d="M12.5 11.5 L16 9.5 M13.5 12.5 L16.5 10.8" stroke="#b0b0b0" stroke-width="0.6"/></svg>
<svg style="left:260px;top:398px" width="16" height="14" viewBox="0 0 16 14"><ellipse cx="8.5" cy="8.5" rx="6.5" ry="4.5" fill="#f2f2f2" stroke="#bdbdbd" stroke-width="0.6"/><path d="M0.8 5.5 L9.5 0.8 L11.5 3.2 L2.5 8.6 Z" fill="#d6202a"/><rect x="7" y="5.8" width="1.6" height="2.2" fill="#333"/><rect x="10" y="5.2" width="2" height="2.8" fill="#333"/><rect x="8.6" y="8" width="1.4" height="1.4" fill="#333"/></svg>
<svg style="left:636px;top:368px" width="18" height="18" viewBox="0 0 18 18"><path d="M0.8 11.5 L10 1.2 L15.8 6.2 L8 15 Z" fill="#f7d21e" stroke="#f0a010" stroke-width="0.7"/><path d="M3.2 10 L11.2 2.4" stroke="#9a5a1a" stroke-width="1.6"/><circle cx="11.5" cy="8.4" r="1" fill="#e8302a"/><circle cx="13" cy="8.4" r="0.9" fill="#f07020"/><rect x="3" y="7.6" width="13.4" height="9.4" fill="#2f9ae6" stroke="#1b74c0" stroke-width="0.5"/><rect x="3" y="9" width="13.4" height="1.8" fill="#1b3c66"/><path d="M4 12.5 H11" stroke="#7cc4f4" stroke-width="0.6"/><rect x="11.6" y="13.2" width="3.2" height="2.2" fill="#c8489a"/><rect x="11.6" y="14.3" width="3.2" height="1.1" fill="#f2c020"/></svg>
<svg style="left:638px;top:428px" width="17" height="16" viewBox="0 0 17 16"><rect x="3.5" y="0.5" width="9" height="4" fill="#fff" stroke="#8a8a8a" stroke-width="0.8"/><rect x="0.5" y="4" width="15" height="7.5" rx="1.5" fill="#dfe3ea" stroke="#9aa0aa" stroke-width="0.8"/><rect x="3" y="5.2" width="10" height="3" fill="#4a4a4a"/><rect x="3.5" y="11" width="9" height="4.5" fill="#fff" stroke="#8a8a8a" stroke-width="0.8"/><rect x="14" y="4.3" width="1.5" height="1.6" fill="#22cc22"/><rect x="14" y="6.2" width="1.5" height="1.6" fill="#e02020"/></svg>
<div style="position:absolute;left:16px;top:459px;width:82px;height:21px;box-sizing:border-box;border:1px solid #6b6b6b;background:#dcdcdc"></div>
<div style="position:absolute;left:105px;top:459px;width:82px;height:21px;box-sizing:border-box;border:1px solid #3a7eb3;background:#dcdcdc"></div>
<div style="position:absolute;left:106px;top:460px;width:80px;height:19px;box-sizing:border-box;border:1px solid #e2eef8"></div>
<div style="position:absolute;left:192px;top:459px;width:82px;height:21px;box-sizing:border-box;border:1px solid #6b6b6b;background:#dcdcdc"></div>
<div style="position:absolute;left:280px;top:459px;width:81px;height:21px;box-sizing:border-box;border:1px solid #6b6b6b;background:#dcdcdc"></div>
<div style="position:absolute;left:705px;top:459px;width:81px;height:21px;box-sizing:border-box;border:1px solid #6b6b6b;background:#dcdcdc"></div>
<div style="position:absolute;top:465px;font:bold 12px/12px 'Liberation Sans', sans-serif;color:#000;white-space:nowrap;left:41.6px;transform:scaleX(1.0167);transform-origin:0 0"><u>A</u>gregar</div>
<div style="position:absolute;top:465px;font:bold 12px/12px 'Liberation Sans', sans-serif;color:#000;white-space:nowrap;left:130.5px;transform:scaleX(0.9973);transform-origin:0 0"><u>C</u>ambiar</div>
<div style="position:absolute;top:465px;font:bold 12px/12px 'Liberation Sans', sans-serif;color:#000;white-space:nowrap;left:217.2px;transform:scaleX(1.0112);transform-origin:0 0"><u>B</u>orrar</div>
<div style="position:absolute;top:465px;font:bold 12px/12px 'Liberation Sans', sans-serif;color:#000;white-space:nowrap;left:303.2px;transform:scaleX(1.0702);transform-origin:0 0"><u>V</u>er</div>
<div style="position:absolute;top:465px;font:bold 12px/12px 'Liberation Sans', sans-serif;color:#000;white-space:nowrap;left:728.4px;transform:scaleX(0.9994);transform-origin:0 0">Salir</div>
<div style="position:absolute;top:465px;font:bold 12px/12px 'Liberation Sans', sans-serif;color:#000;white-space:nowrap;left:493.4px;transform:scaleX(1.1384);transform-origin:0 0">Ult. Cuota Paga:</div>
<svg style="left:21px;top:462px" width="16" height="16" viewBox="0 0 16 16"><path d="M0.5 0.8 H6.5 L7.8 2.5 H15.5 V15.5 H0.5 Z" fill="#fdf2c0" stroke="#f0a03c" stroke-width="1"/><path d="M1 8 H15 V15 H1 Z" fill="#fcd24a"/><path d="M1 8.2 H15" stroke="#e8a040" stroke-width="0.8"/><path d="M1.2 15 H15" stroke="#f0a03c" stroke-width="1"/><path d="M7 10.6 H15.5 V13.8 H7 Z M9.6 7.8 H12.9 V16 H9.6 Z" fill="#3fb83f"/><path d="M8 12.2 H14.5 M11.25 9 V15" stroke="#86e086" stroke-width="0.8"/></svg>
<svg style="left:110px;top:461px" width="16" height="16" viewBox="0 0 16 16"><path d="M0.5 0.8 H6.5 L7.8 2.5 H15.5 V15.5 H0.5 Z" fill="#fdf2c0" stroke="#f0a03c" stroke-width="1"/><path d="M1 8 H15 V15 H1 Z" fill="#fcd24a"/><path d="M1 8.2 H15" stroke="#e8a040" stroke-width="0.8"/><path d="M1.2 15 H15" stroke="#f0a03c" stroke-width="1"/><path d="M8.5 3.5 H13.5 V8.5 H16 L11 14.5 L5.5 8.5 H8.5 Z" fill="#3ec43e"/><path d="M10 5 H12 V9" stroke="#9be89b" stroke-width="0.8" fill="none"/></svg>
<svg style="left:196px;top:461px" width="18" height="18" viewBox="0 0 18 18"><path d="M3.5 1.2 L11 11 M13.5 1.2 L6 11" stroke="#5a6f95" stroke-width="1.6" fill="none"/><ellipse cx="4.8" cy="13.2" rx="3.6" ry="3.1" fill="#1847bf"/><ellipse cx="12.2" cy="13.2" rx="3.6" ry="3.1" fill="#1847bf"/><circle cx="4.6" cy="13.5" r="1.1" fill="#e8eef8"/><circle cx="12.4" cy="13.5" r="1.1" fill="#e8eef8"/></svg>
<svg style="left:284px;top:460px" width="18" height="18" viewBox="0 0 18 18"><path d="M1.5 1 H9 L11.5 3.5 V14 H1.5 Z" fill="#fafcff" stroke="#aab0ba" stroke-width="0.8"/><rect x="2" y="4.8" width="5" height="3" fill="#b8d4ee"/><circle cx="8" cy="9.2" r="3.6" fill="#dce9f6" stroke="#6e8aa8" stroke-width="1.2"/><path d="M10.8 12 L14.6 15.6" stroke="#3a3a3a" stroke-width="1.6"/></svg>
<svg style="left:708px;top:461px" width="20" height="18" viewBox="0 0 20 18"><defs><linearGradient id="dg" x1="0" x2="1"><stop offset="0" stop-color="#c05e1e"/><stop offset="1" stop-color="#f0a458"/></linearGradient><linearGradient id="dg2" x1="0" x2="1"><stop offset="0" stop-color="#a8a8a8"/><stop offset="1" stop-color="#e8e8e8"/></linearGradient></defs><rect x="1.5" y="1.2" width="10.5" height="14.5" fill="url(#dg2)" stroke="#e08a3a" stroke-width="0.8"/><path d="M0.8 1 L5.6 2.6 L5.6 17.2 L0.8 15.4 Z" fill="url(#dg)"/><path d="M8.2 8 L12.6 3.8 V6.4 H17 V9.8 H12.6 V12.4 Z" fill="#4cc84c" stroke="#0f8a0f" stroke-width="0.9"/></svg>
</body></html>
